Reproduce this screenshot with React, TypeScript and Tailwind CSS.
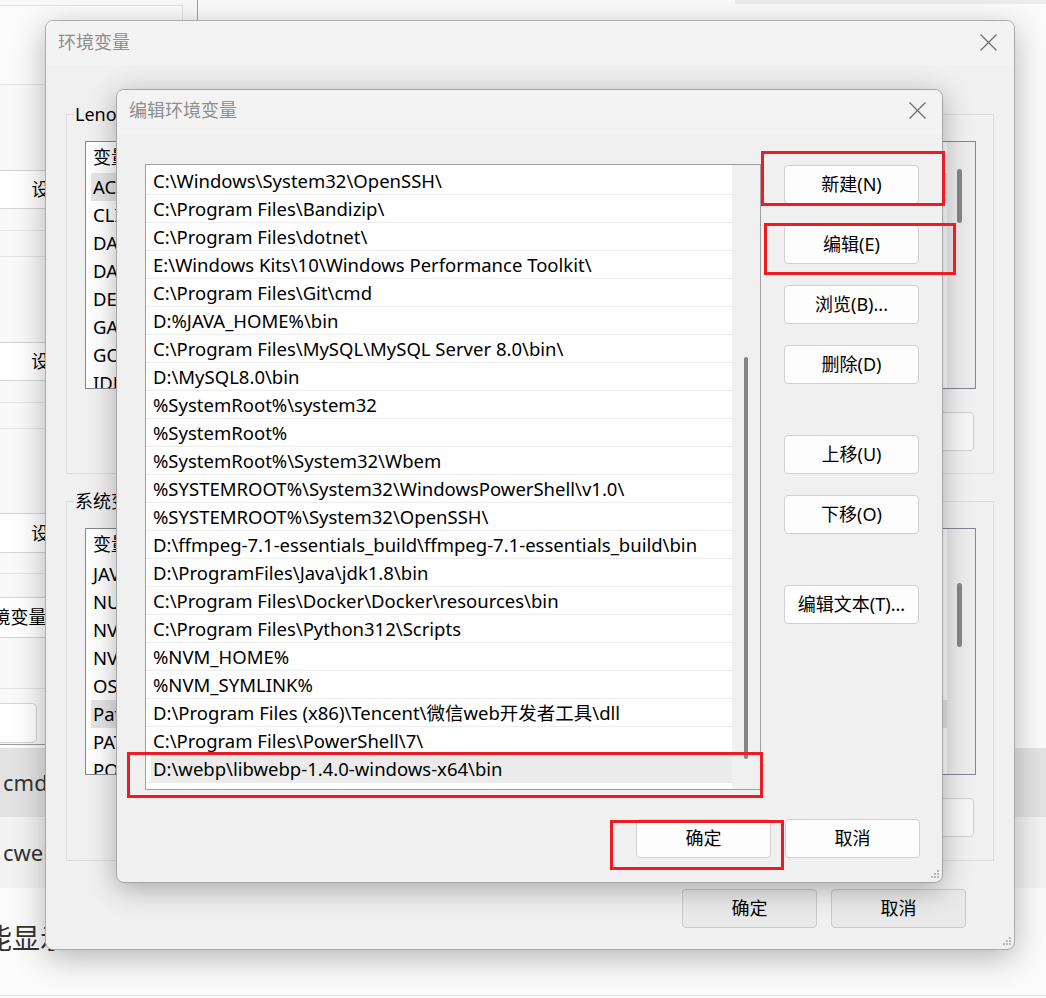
import React from "react";

const F = "font-['Noto_Sans','Noto_Sans_CJK_SC',sans-serif]";

const pathRows = [
  "C:\\Windows\\System32\\OpenSSH\\",
  "C:\\Program Files\\Bandizip\\",
  "C:\\Program Files\\dotnet\\",
  "E:\\Windows Kits\\10\\Windows Performance Toolkit\\",
  "C:\\Program Files\\Git\\cmd",
  "D:%JAVA_HOME%\\bin",
  "C:\\Program Files\\MySQL\\MySQL Server 8.0\\bin\\",
  "D:\\MySQL8.0\\bin",
  "%SystemRoot%\\system32",
  "%SystemRoot%",
  "%SystemRoot%\\System32\\Wbem",
  "%SYSTEMROOT%\\System32\\WindowsPowerShell\\v1.0\\",
  "%SYSTEMROOT%\\System32\\OpenSSH\\",
  "D:\\ffmpeg-7.1-essentials_build\\ffmpeg-7.1-essentials_build\\bin",
  "D:\\ProgramFiles\\Java\\jdk1.8\\bin",
  "C:\\Program Files\\Docker\\Docker\\resources\\bin",
  "C:\\Program Files\\Python312\\Scripts",
  "%NVM_HOME%",
  "%NVM_SYMLINK%",
  "D:\\Program Files (x86)\\Tencent\\微信web开发者工具\\dll",
  "C:\\Program Files\\PowerShell\\7\\",
  "D:\\webp\\libwebp-1.4.0-windows-x64\\bin",
];

const userVars = ["ACSvcPort", "CLION", "DATAGRIP", "DATASPELL", "DEVECO", "GATEWAY", "GOLAND", "IDEA"];
const sysVars = ["JAVA_HOME", "NUMBER_OF_PROCESSORS", "NVM_HOME", "NVM_SYMLINK", "OS", "Path", "PATHEXT", "POWERSHELL"];

function CloseIcon() {
  return (
    <svg width="17" height="17" viewBox="0 0 17 17" fill="none" stroke="#6e6e6e" strokeWidth="1.2">
      <path d="M0.5 0.5L16.5 16.5M16.5 0.5L0.5 16.5" />
    </svg>
  );
}

function Grip() {
  return (
    <svg width="10" height="10" viewBox="0 0 10 10" fill="#b8b8b8">
      <rect x="7" y="1" width="2" height="2" />
      <rect x="4" y="4" width="2" height="2" />
      <rect x="7" y="4" width="2" height="2" />
      <rect x="1" y="7" width="2" height="2" />
      <rect x="4" y="7" width="2" height="2" />
      <rect x="7" y="7" width="2" height="2" />
    </svg>
  );
}

function Btn({ children, className = "" }: { children: React.ReactNode; className?: string }) {
  return (
    <button
      className={`flex h-[39px] w-[135px] shrink-0 items-center justify-center rounded-[4px] border text-[18px] text-black ${className}`}
    >
      {children}
    </button>
  );
}

function VarList({
  rows,
  selected,
  thumbTop,
  thumbH,
  h,
}: {
  rows: string[];
  selected: string;
  thumbTop: number;
  thumbH: number;
  h: string;
}) {
  return (
    <div className={`flex ${h} border border-[#828790] bg-white`}>
      <div className="flex-1 overflow-hidden">
        <div className="flex h-[31px] items-center pl-[7px] text-[18px] text-black">
          <span className="w-[300px]">变量</span>
          <span>值</span>
        </div>
        {rows.map((r) => (
          <div
            key={r}
            className={`ml-[5px] flex h-[28px] items-center pl-[2px] text-[18.5px] text-black ${
              r === selected ? "bg-[#e5e5e5]" : ""
            }`}
          >
            <span className="w-[300px]">{r}</span>
          </div>
        ))}
      </div>
      <div className="w-[28px] bg-[#ececec] pl-[10px]">
        <div className="w-[5px] rounded-full bg-[#868686]" style={{ marginTop: thumbTop, height: thumbH }} />
      </div>
    </div>
  );
}

function Group({
  label,
  rows,
  selected,
  thumbTop,
  thumbH,
  listH,
  btns,
  className = "",
}: {
  label: string;
  rows: string[];
  selected: string;
  thumbTop: number;
  thumbH: number;
  listH: string;
  btns: string[];
  className?: string;
}) {
  return (
    <div className={`relative h-[360px] border border-[#dcdcdc] pl-[18px] pr-[17px] pt-[26px] ${className}`}>
      <span className="absolute left-[7px] top-[-13px] bg-[#f0f0f0] px-[1px] text-[18px] leading-[24px] text-black">
        {label}
      </span>
      <VarList rows={rows} selected={selected} thumbTop={thumbTop} thumbH={thumbH} h={listH} />
      <div className="mt-[23px] flex justify-end gap-[14px] pr-[2px]">
        {btns.map((b) => (
          <Btn key={b} className="border-[#cfcfcf] bg-[#f6f6f6]">
            {b}
          </Btn>
        ))}
      </div>
    </div>
  );
}

function BackgroundWindow() {
  const line = "h-px w-[183px] bg-[#e3e3e3]";
  const btn =
    "flex h-[39px] items-center justify-center rounded-[5px] border border-[#d3d3d3] bg-white text-[18px] text-black";
  return (
    <div className="absolute left-0 top-0 flex h-[745px] w-[198px] flex-col border-r border-b border-[#9c9c9c] bg-[#f9f9f9]">
      <div className="mt-[5px] h-[80px] w-[183px] border-y border-r border-[#e3e3e3] bg-[#fbfbfb]" />
      <div className={`mt-[85px] ml-[-6px] w-[146px] ${btn}`}>设置(S)...</div>
      <div className={`mt-[21px] ${line}`} />
      <div className={`mt-[25px] ${line}`} />
      <div className={`mt-[85px] ml-[-6px] w-[146px] ${btn}`}>设置(E)...</div>
      <div className={`mt-[21px] ${line}`} />
      <div className={`mt-[25px] ${line}`} />
      <div className={`mt-[84px] ml-[-6px] h-[40px] w-[146px] ${btn}`}>设置(T)...</div>
      <div className={`mt-[20px] ${line}`} />
      <div className={`mt-[23px] ml-[-52px] h-[41px] w-[164px] ${btn}`}>环境变量(N)...</div>
      <div className={`mt-[50px] ${line}`} />
      <div className={`mt-[14px] ml-[-110px] h-[40px] w-[147px] ${btn}`}>确定</div>
    </div>
  );
}

export default function App() {
  return (
    <div className={`relative h-[998px] w-[1046px] overflow-hidden bg-[#fbfbfb] ${F}`}>
      {/* page behind everything */}
      <div className="flex h-full flex-col">
        <div className="ml-[735px] h-[4px] bg-[#ececec]" />
        <div className="h-[744px]" />
        <div className="flex h-[69px] items-center bg-[#e3e3e3] pl-[3px] text-[22px] text-[#333]">cmd</div>
        <div className="flex h-[71px] items-center bg-[#f2f2f2] pl-[3px] text-[22px] text-[#333]">cwel</div>
        <div className="flex-1 pt-[32px]">
          <div className="ml-[-16px] text-[28px] leading-[36px] text-[#333]">能显示</div>
        </div>
        <div className="h-[3px] border-t border-[#dedede]" />
      </div>

      <BackgroundWindow />

      {/* 环境变量 dialog */}
      <div className="absolute left-[45px] top-[20px] flex h-[930px] w-[970px] flex-col overflow-hidden rounded-[8px] border border-[#ababab] bg-[#f0f0f0] shadow-[0_8px_32px_rgba(0,0,0,0.28)]">
        <div className="flex h-[44px] items-center justify-between bg-[#f3f3f3] pb-[2px] pl-[12px] pr-[17px]">
          <span className="text-[18px] text-[#8e8e8e]">环境变量</span>
          <CloseIcon />
        </div>
        <div className="flex flex-col px-[20px] pt-[49px]">
          <Group
            label="Lenovo 的用户变量"
            rows={userVars}
            selected="ACSvcPort"
            thumbTop={27}
            thumbH={54}
            listH="h-[248px]"
            btns={["新建(N)...", "编辑(E)...", "删除(D)"]}
          />
          <Group
            label="系统变量"
            rows={sysVars}
            selected="Path"
            thumbTop={54}
            thumbH={64}
            listH="h-[247px]"
            btns={["新建(W)...", "编辑(I)...", "删除(L)"]}
            className="mt-[27px]"
          />
          <div className="mt-[28px] flex justify-end gap-[14px] pr-[28px]">
            <Btn className="border-[#c9c9c9] bg-[#e9e9e9]">确定</Btn>
            <Btn className="border-[#c9c9c9] bg-[#e9e9e9]">取消</Btn>
          </div>
        </div>
        <div className="absolute bottom-[3px] right-[2px]">
          <Grip />
        </div>
      </div>

      {/* 编辑环境变量 dialog */}
      <div className="absolute left-[116px] top-[89px] flex h-[794px] w-[827px] flex-col overflow-hidden rounded-[8px] border border-[#a6a6a6] bg-[#f0f0f0] shadow-[0_6px_28px_rgba(0,0,0,0.3)]">
        <div className="flex h-[44px] items-center justify-between bg-[#f3f3f3] pb-[3px] pl-[12px] pr-[16px]">
          <span className="text-[18px] text-[#8e8e8e]">编辑环境变量</span>
          <CloseIcon />
        </div>
        <div className="flex pl-[28px] pt-[30px]">
          <div className="flex h-[626px] w-[616px] border border-[#9f9f9f] bg-white">
            <div className="flex-1 overflow-hidden pt-[2px]">
              {pathRows.map((r, i) => (
                <div key={r} className="h-[28px] border-b border-[#ececec]">
                  <div
                    className={`ml-[5px] flex h-[27px] items-center whitespace-nowrap pl-[2px] text-[18.5px] text-black ${
                      i === pathRows.length - 1 ? "bg-[#ebebeb]" : ""
                    }`}
                  >
                    {r}
                  </div>
                </div>
              ))}
            </div>
            <div className="w-[28px] bg-[#f0f0f0] pl-[12px] pt-[192px]">
              <div className="h-[402px] w-[4px] rounded-full bg-[#858585]" />
            </div>
          </div>
          <div className="ml-[23px] flex flex-col pt-[1px]">
            <Btn className="border-[#d1d1d1] bg-[#fdfdfd]">新建(N)</Btn>
            <Btn className="mt-[21px] border-[#d1d1d1] bg-[#fdfdfd]">编辑(E)</Btn>
            <Btn className="mt-[21px] border-[#d1d1d1] bg-[#fdfdfd]">浏览(B)...</Btn>
            <Btn className="mt-[21px] border-[#d1d1d1] bg-[#fdfdfd]">删除(D)</Btn>
            <Btn className="mt-[51px] border-[#d1d1d1] bg-[#fdfdfd]">上移(U)</Btn>
            <Btn className="mt-[21px] border-[#d1d1d1] bg-[#fdfdfd]">下移(O)</Btn>
            <Btn className="mt-[51px] border-[#d1d1d1] bg-[#fdfdfd]">编辑文本(T)...</Btn>
          </div>
        </div>
        <div className="mt-[29px] flex justify-end gap-[14px] pr-[22px]">
          <Btn className="border-[#d1d1d1] bg-[#fdfdfd]">确定</Btn>
          <Btn className="border-[#d1d1d1] bg-[#fdfdfd]">取消</Btn>
        </div>
        <div className="absolute bottom-[3px] right-[2px]">
          <Grip />
        </div>
      </div>

      {/* red annotation boxes */}
      <div className="absolute left-[761px] top-[151px] h-[55px] w-[184px] border-[3px] border-[#ed1c24]" />
      <div className="absolute left-[764px] top-[223px] h-[52px] w-[192px] border-[3px] border-[#ed1c24]" />
      <div className="absolute left-[127px] top-[752px] h-[46px] w-[636px] border-[3px] border-[#ed1c24]" />
      <div className="absolute left-[610px] top-[820px] h-[50px] w-[174px] border-[3px] border-[#ed1c24]" />
    </div>
  );
}
